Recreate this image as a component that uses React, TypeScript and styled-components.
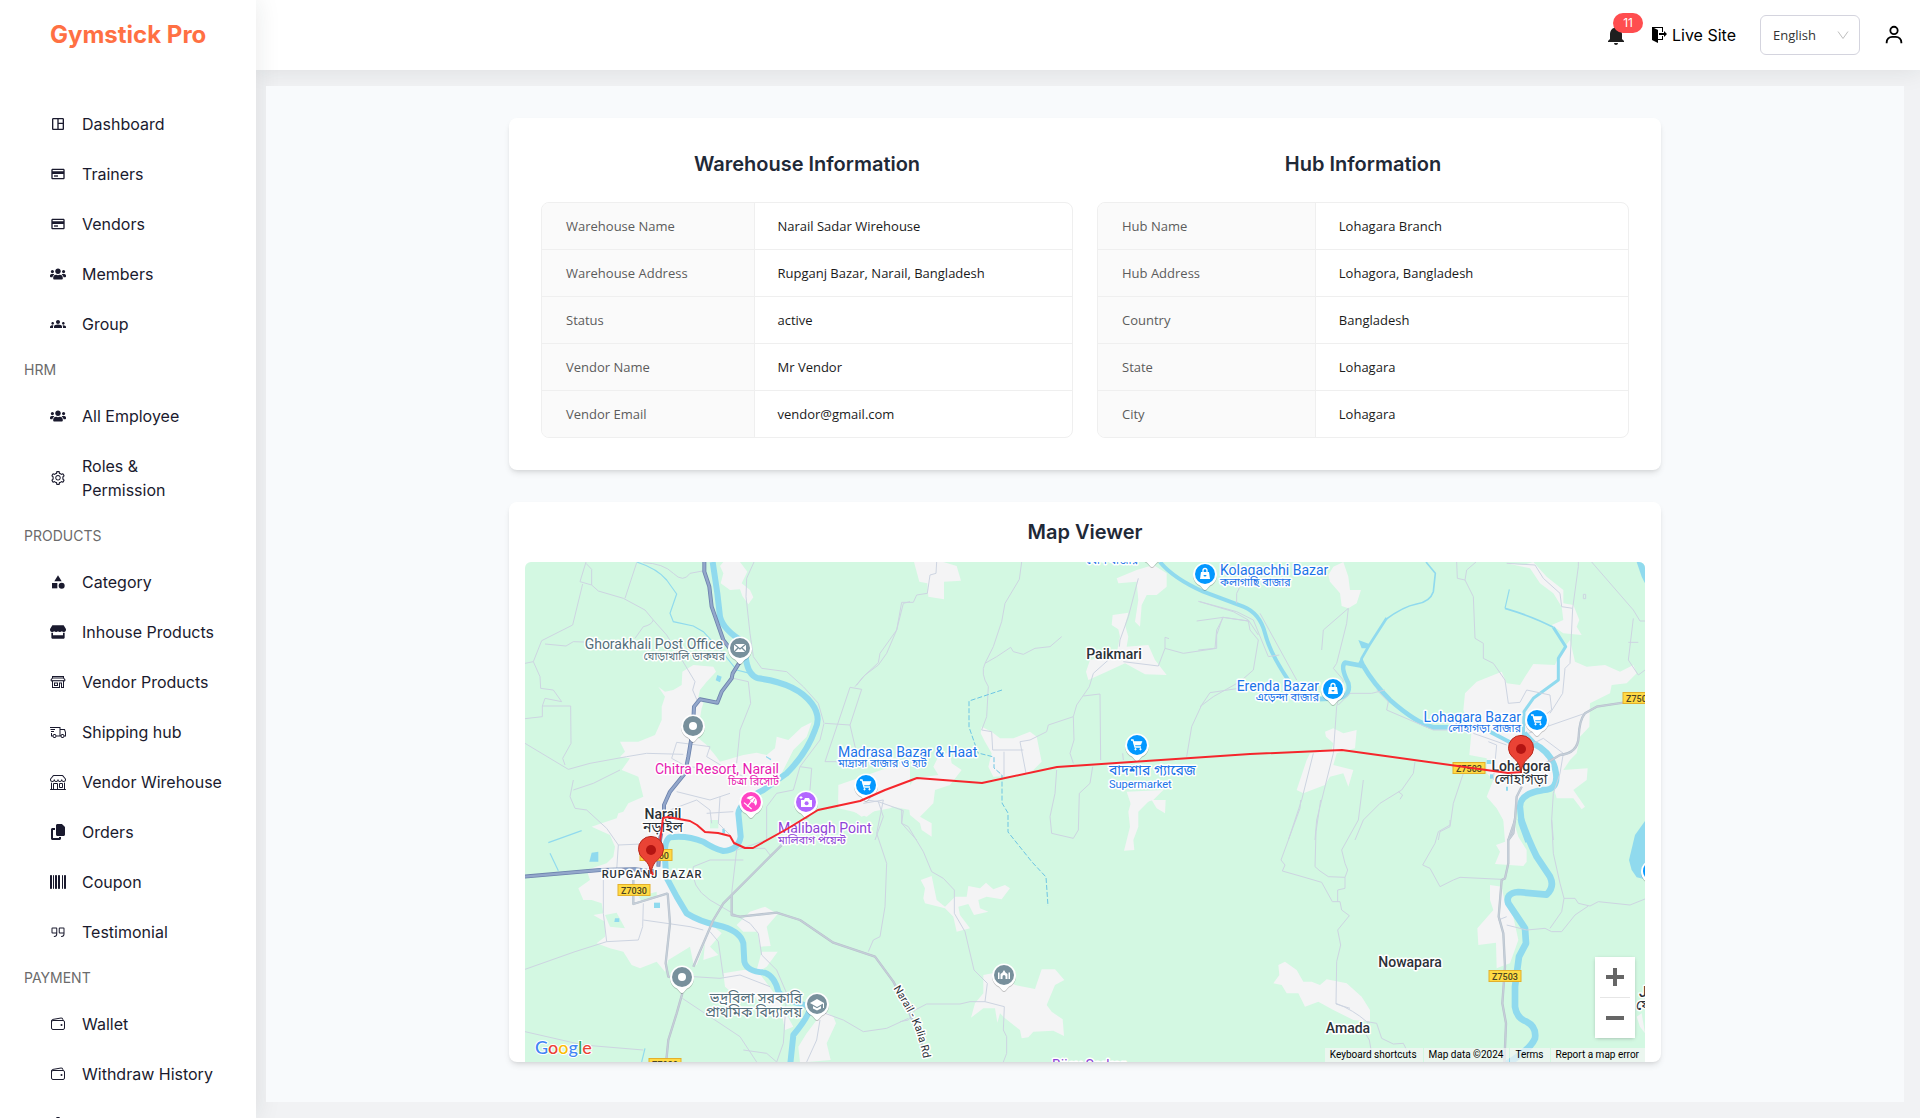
import React from "react";
import styled, { createGlobalStyle } from "styled-components";
import type { IconType } from "react-icons";
import {
  MdOutlineSpaceDashboard,
  MdGroups,
  MdCategory,
  MdNotifications,
} from "react-icons/md";
import { FaUsers, FaStore } from "react-icons/fa";
import { FaCopy, FaBarcode } from "react-icons/fa6";
import { BiCreditCard, BiUser } from "react-icons/bi";
import { AiOutlineSetting } from "react-icons/ai";
import { LiaStoreAltSolid, LiaShippingFastSolid } from "react-icons/lia";
import { PiQuotes } from "react-icons/pi";
import { BsShop } from "react-icons/bs";
import { IoWalletOutline } from "react-icons/io5";
import { ImExit } from "react-icons/im";

const inter = `Inter, "Liberation Sans", sans-serif`;
const body = `"Open Sans", "Noto Sans", sans-serif`;
const mapFont = `Roboto, "Noto Sans", "Noto Sans Bengali", sans-serif`;

const GlobalStyle = createGlobalStyle`
  *, *::before, *::after { box-sizing: border-box; }
  body {
    margin: 0;
    background: #f1f2f4;
    font-family: ${inter};
    font-size: 16px;
    line-height: 24px;
    color: #000;
  }
  button, select { font: inherit; color: inherit; }
`;

/* ---------- shell ---------- */

const Shell = styled.div`
  display: grid;
  grid-template-columns: 256px minmax(0, 1fr);
  height: 100vh;
  overflow: hidden;
`;

const Sidebar = styled.aside`
  position: relative;
  z-index: 2;
  background: #fff;
  box-shadow: 0 0 24px rgba(30, 35, 40, 0.1);
  overflow: hidden;
`;

const Brand = styled.a`
  display: flex;
  align-items: center;
  height: 70px;
  padding-left: 50px;
  color: #ff7043;
  font-size: 24px;
  font-weight: 700;
  text-decoration: none;
`;

const Nav = styled.nav`
  padding-top: 29px;
`;

const NavList = styled.ul`
  margin: 0;
  padding: 0;
  list-style: none;
`;

const NavHeading = styled.h2`
  margin: 0;
  padding: 9px 24px;
  font-size: 14px;
  font-weight: 400;
  line-height: 24px;
  color: #6b6b6b;
`;

const NavLink = styled.a`
  display: flex;
  align-items: center;
  gap: 16px;
  min-height: 50px;
  padding: 13px 34px 13px 50px;
  color: #1a1a2e;
  text-decoration: none;

  svg {
    flex: none;
    width: 16px;
    height: 16px;
  }
`;

const Page = styled.div`
  display: flex;
  flex-direction: column;
  min-width: 0;
`;

const Header = styled.header`
  position: relative;
  z-index: 1;
  flex: none;
  display: flex;
  align-items: center;
  justify-content: flex-end;
  height: 70px;
  padding-right: 15px;
  background: #fff;
  box-shadow: 0 0 24px rgba(30, 35, 40, 0.1);
`;

const BellButton = styled.button`
  position: relative;
  display: flex;
  margin-right: 24px;
  padding: 0;
  border: 0;
  background: none;
  color: #1f1f1f;
`;

const Badge = styled.span`
  position: absolute;
  left: 9px;
  top: -10px;
  min-width: 30px;
  padding: 0 8px;
  border-radius: 10px;
  background: #ff4d4f;
  color: #fff;
  font-size: 12px;
  line-height: 20px;
  text-align: center;
`;

const LiveLink = styled.a`
  display: flex;
  align-items: center;
  gap: 4px;
  margin-right: 24px;
  color: #000;
  text-decoration: none;
`;

const LanguageBox = styled.label`
  position: relative;
  display: flex;
  align-items: center;
  margin-right: 23px;

  svg {
    position: absolute;
    right: 11px;
    pointer-events: none;
  }
`;

const LanguageSelect = styled.select`
  appearance: none;
  width: 100px;
  height: 40px;
  padding: 0 30px 0 12px;
  border: 1px solid #d4d4de;
  border-radius: 6px;
  background: #fff;
  color: #333;
  font-family: ${body};
  font-size: 13px;
`;

const HiddenLabel = styled.span`
  position: absolute;
  width: 1px;
  height: 1px;
  overflow: hidden;
  clip-path: inset(50%);
`;

const IconButton = styled.button`
  display: flex;
  padding: 0;
  border: 0;
  background: none;
`;

const Main = styled.main`
  flex: 1;
  display: flex;
  min-height: 0;
  padding: 16px 16px 16px 10px;
`;

const Canvas = styled.div`
  position: relative;
  z-index: 3;
  flex: 1;
  padding: 32px;
  background: #f8fafc;
  overflow: hidden;
`;

const Column = styled.div`
  display: flex;
  flex-direction: column;
  gap: 32px;
  max-width: 1152px;
  margin: 0 auto;
`;

/* ---------- cards ---------- */

const Card = styled.section<{ $map?: boolean }>`
  padding: ${(p) => (p.$map ? "16px 16px 0" : "32px")};
  border-radius: 8px;
  background: #fff;
  box-shadow: 0 4px 6px -1px rgba(0, 0, 0, 0.1), 0 2px 4px -2px rgba(0, 0, 0, 0.1);
`;

const InfoGrid = styled.div`
  display: grid;
  grid-template-columns: repeat(2, minmax(0, 1fr));
  gap: 24px;
`;

const CardTitle = styled.h2<{ $gap: number }>`
  margin: 0 0 ${(p) => p.$gap}px;
  color: #1f2937;
  font-size: 20px;
  font-weight: 600;
  line-height: 28px;
  text-align: center;
`;

const TableFrame = styled.div`
  border: 1px solid #efefef;
  border-radius: 8px;
  overflow: hidden;
`;

const InfoTable = styled.table`
  width: 100%;
  border-collapse: collapse;
  table-layout: fixed;
  font-family: ${body};
  font-size: 13px;
  line-height: 22px;
  text-align: left;

  tr + tr > * {
    border-top: 1px solid #efefef;
  }
`;

const LabelCell = styled.th<{ $share: number }>`
  width: ${(p) => p.$share}%;
  padding: 12px 24px;
  border-right: 1px solid #efefef;
  background: #fafafa;
  color: #5c5c5c;
  font-weight: 400;
`;

const ValueCell = styled.td`
  padding: 12px 23px;
  color: #1a1a1a;
`;

/* ---------- map ---------- */

const MapFrame = styled.div`
  position: relative;
  height: 500px;
  border-radius: 6px 6px 0 0;
  background: #d3f8e2;
  font-family: ${mapFont};
  overflow: hidden;
`;

const MapDrawing = styled.svg`
  display: block;
  width: 100%;
  height: 100%;
`;

const MapText = styled.text<{ $color: string; $size: number; $weight?: number }>`
  fill: ${(p) => p.$color};
  font-size: ${(p) => p.$size}px;
  font-weight: ${(p) => p.$weight ?? 400};
  stroke: #fff;
  stroke-width: 3px;
  stroke-linejoin: round;
  paint-order: stroke;
`;

const ZoomControl = styled.div`
  position: absolute;
  right: 10px;
  bottom: 24px;
  display: flex;
  flex-direction: column;
  width: 40px;
  padding: 0 5px;
  background: #fff;
  box-shadow: 0 1px 4px -1px rgba(0, 0, 0, 0.3);
`;

const ZoomButton = styled.button`
  display: flex;
  align-items: center;
  justify-content: center;
  height: 40px;
  padding: 0;
  border: 0;
  background: none;

  & + & {
    height: 41px;
    border-top: 1px solid #e6e6e6;
  }
`;

const Attribution = styled.div`
  position: absolute;
  right: 0;
  bottom: 0;
  display: flex;
  gap: 1px;
  font-size: 10px;
  line-height: 14px;

  > * {
    padding: 0 6px 0 5px;
    border: 0;
    background: rgba(245, 245, 245, 0.7);
    color: #000;
    text-decoration: none;
  }
`;

/* ---------- data ---------- */

type NavItem = { label: string; icon: IconType };
type NavGroup = { title?: string; items: NavItem[] };

const navGroups: NavGroup[] = [
  {
    items: [
      { label: "Dashboard", icon: MdOutlineSpaceDashboard },
      { label: "Trainers", icon: BiCreditCard },
      { label: "Vendors", icon: BiCreditCard },
      { label: "Members", icon: FaUsers },
      { label: "Group", icon: MdGroups },
    ],
  },
  {
    title: "HRM",
    items: [
      { label: "All Employee", icon: FaUsers },
      { label: "Roles & Permission", icon: AiOutlineSetting },
    ],
  },
  {
    title: "PRODUCTS",
    items: [
      { label: "Category", icon: MdCategory },
      { label: "Inhouse Products", icon: FaStore },
      { label: "Vendor Products", icon: LiaStoreAltSolid },
      { label: "Shipping hub", icon: LiaShippingFastSolid },
      { label: "Vendor Wirehouse", icon: BsShop },
      { label: "Orders", icon: FaCopy },
      { label: "Coupon", icon: FaBarcode },
      { label: "Testimonial", icon: PiQuotes },
    ],
  },
  {
    title: "PAYMENT",
    items: [
      { label: "Wallet", icon: IoWalletOutline },
      { label: "Withdraw History", icon: IoWalletOutline },
      { label: "", icon: AiOutlineSetting },
    ],
  },
];

const warehouseRows = [
  ["Warehouse Name", "Narail Sadar Wirehouse"],
  ["Warehouse Address", "Rupganj Bazar, Narail, Bangladesh"],
  ["Status", "active"],
  ["Vendor Name", "Mr Vendor"],
  ["Vendor Email", "vendor@gmail.com"],
];

const hubRows = [
  ["Hub Name", "Lohagara Branch"],
  ["Hub Address", "Lohagora, Bangladesh"],
  ["Country", "Bangladesh"],
  ["State", "Lohagara"],
  ["City", "Lohagara"],
];

/* Each tile keeps its shapes at three units to the map pixel. */
type Tile = {
  x: number;
  y: number;
  built?: string[];
  green?: string[];
  lakes?: string[];
  lanes?: string[];
  trunks?: string[];
  highways?: string[];
  rivers?: [string, number][];
  streams?: string[];
};

const tiles: Tile[] = [
  {
    x: 510,
    y: 490,
    built: [
      "M630 228 640 216 690 216 712 245 695 280 720 300 730 322 715 343 697 318 690 298 660 300 632 280 640 250Z",
      "M517 545 550 525 610 530 618 545 590 575 570 600 565 620 580 640 575 655 560 740 590 765 615 795 630 815 700 795 740 788 770 795 795 775 800 740 835 750 875 712 905 697 890 740 850 780 815 850 760 900 690 940 685 980 692 1040 680 1075 640 1085 600 1070 560 1045 500 1040 465 1055 465 1160 490 1210 530 1270 600 1300 635 1330 600 1370 625 1395 580 1410 585 1360 560 1425 550 1420 540 1370 475 1410 465 1445 440 1415 390 1435 365 1425 340 1385 300 1375 260 1360 285 1340 285 1295 250 1275 280 1270 275 1240 245 1230 220 1230 205 1195 240 1170 230 1140 290 1120 310 1100 315 1070 300 1035 245 1010 275 1000 320 985 325 970 340 965 355 940 400 920 385 860 335 840 360 805 330 800 345 785 330 755 385 755 435 735 455 690 455 650 465 620 445 590 465 605 490 600 515 585Z",
    ],
    lakes: ["M622 555 635 560 630 577 617 571Z", "M768 798 784 807 782 811 768 802Z"],
    lanes: [
      "M228 216 210 275 245 285 245 238 228 220",
      "M245 285 265 303 340 325 405 360 430 390 470 435 510 500 555 575 548 600 565 640",
      "M218 282 188 405 95 452 70 515 45 520",
      "M105 462 168 468 190 455 280 458",
      "M430 390Q425 405 400 410L375 445",
      "M380 218 345 325",
      "M400 218Q460 220 490 250T540 250L583 242",
      "M70 515 90 560 92 595 130 600 155 635 105 625 97 648 97 680 45 686",
      "M97 648 182 648 183 760 158 805 165 825",
      "M45 760 175 838 240 820 350 800 410 790 520 793",
      "M732 216 710 265 708 320 720 430 730 500 755 535 830 545 880 590 925 640 942 700",
      "M670 565 715 575 722 640 690 720 680 820",
      "M1200 335 1180 340 1160 420 1130 490 1105 525 1065 555 1040 585",
      "M1020 592 1055 598 1020 705 945 700",
      "M1020 592 945 815 985 815",
      "M942 700 930 750 870 830 850 900",
      "M1020 705 1040 790",
      "M870 830 905 835 900 900",
      "M500 757 485 805 530 830 600 835",
      "M500 757 600 770 590 800 640 830 700 860",
      "M190 900 250 880 330 840",
    ],
    highways: [
      "M583 212 583 245 598 290 605 350 640 450 690 515 668 550 665 565 635 605 622 638 570 628 552 650 550 690",
      "M545 740 535 800 525 850 480 905 462 945 462 980 450 1050 445 1130",
      "M42 1160 270 1140 375 1138 440 1145",
    ],
    streams: ["M380 216Q440 235 470 270L500 312 480 370 490 395 550 408 580 425 640 490 680 540 720 550"],
  },
  {
    x: 510,
    y: 780,
    built: [
      "M680 435 720 395 765 380 803 402 770 440 782 498 750 500 742 455 700 455Z",
      "M755 515 803 515 770 560 745 575 800 650 850 740 825 750 815 700 730 650 680 650 645 620 640 580 700 570 740 570Z",
      "M865 800 890 760 920 720 925 680 970 710 978 730 950 790 962 840 870 848Z",
      "M985 15 1200 -60 1200 90 1150 80 1110 80 1070 110 1030 95 985 85Z",
    ],
    green: ["M600 120 625 120 625 145 600 145Z", "M285 405 320 398 345 445 300 440Z", "M385 350 440 335 440 350 395 362Z"],
    lakes: [
      "M245 218 265 215 265 245 238 245Z",
      "M432 368 450 368 450 384 432 384Z",
      "M315 415 328 415 328 426 313 426Z",
      "M637 146 645 146 645 160 637 160Z",
    ],
    lanes: [
      "M190 0 180 50 195 85 230 90 290 145 325 195 320 270",
      "M280 300 280 400 290 485",
      "M45 568 195 515 290 485 385 480 398 440 400 370",
      "M400 420 540 440 580 450",
      "M325 195 440 190",
      "M500 35 600 60 660 40",
      "M480 90 560 60 600 90 605 130",
      "M630 50 625 130 660 165",
      "M590 100 670 95",
      "M550 260 600 240 700 240",
      "M550 260Q540 320 600 360L720 430 745 460 755 525 800 570 830 640",
      "M600 455 625 485 640 590",
      "M550 590 630 595 690 585 780 620",
      "M517 655 690 770 740 846",
      "M45 755 220 795 400 810",
      "M700 810 770 820 800 846",
      "M1120 60 1100 160 1130 250 1125 380 1110 470 1090 480 1075 515",
      "M945 700 1000 720 1060 755 1130 745 1195 715",
      "M930 720 920 780 890 846",
      "M830 640 820 790 800 846",
      "M1120 60 1060 70",
      "M770 80 770 180 680 210 665 340",
      "M850 30 800 40 770 80",
      "M690 205 765 205 780 225",
    ],
    trunks: [
      "M820 190 640 370 610 420 550 560",
      "M665 345 665 405 690 410 800 398 870 420 970 488 1095 530 1150 605 1195 690 1250 830",
      "M473 340 480 430 467 550 475 590 515 600",
      "M370 300 370 372 473 340",
      "M517 640 500 700 475 780 468 850",
    ],
    rivers: [
      [
        "M608 -654 622 -560 630 -490Q640 -450 700 -415L710 -350Q720 -310 745 -305 860 -290 905 -230 935 -190 915 -150 890 -80 830 -20L760 30Q690 65 685 100L692 170Q685 210 640 213 610 205 580 185 530 165 480 172 463 180 465 230L468 290 500 350 530 400Q570 425 620 435 690 450 700 490L703 545Q710 575 765 578 795 590 805 635 820 660 900 680 900 705 850 765L840 860",
        18,
      ],
    ],
    streams: ["M115 188 215 152", "M120 220 145 272", "M405 805 395 846"],
  },
  {
    x: 800,
    y: 540,
    built: [
      "M342 66 430 66 470 78 483 122 432 125 432 178 385 170 382 130 358 125Z",
      "M950 115 1010 90 1060 75 1100 100 1100 140 1070 165 1040 165 1025 195 1020 260 1005 245 1015 180 1010 125 955 130Z",
      "M938 225 985 218 975 255 985 290 980 320 1045 315 1065 360 1100 405 1035 403 975 370 910 400 865 420 858 395 870 360 950 340 960 290 955 268 935 255Z",
      "M545 560 575 575 600 595 640 595 690 575 710 590 725 665 700 690 680 705 580 710 565 680 575 640 555 605 542 580Z",
      "M400 680 420 640 450 640 455 670 485 690 450 735 405 750 400 790 360 830 395 850 395 890 365 870 360 850 330 825 320 750 345 715 415 705Z",
      "M118 740 240 745 275 765 300 790 270 805 215 815 185 830 115 780Z",
    ],
    lanes: [
      "M410 66 408 100 390 105 382 160 350 165 340 187 305 187 290 270 240 340 235 368 190 410 165 440",
      "M665 66 658 118 615 190 605 245 580 320 555 370Q540 400 565 440L560 530 545 570 575 575 578 630 670 630",
      "M555 370 590 350 632 322 640 335 670 343 705 325 750 320 785 290",
      "M1015 115 985 230 960 300 958 320",
      "M925 360 880 400 868 440 830 495 820 530 745 555 740 575 690 600 660 605 678 700",
      "M850 468 900 462 902 660",
      "M820 530 822 600 810 640 820 670",
      "M612 635 612 710",
      "M970 365 1075 378 1095 325 1150 340 1250 325 1250 285 1268 232 1345 243",
      "M1095 325 1095 292 1107 296",
      "M1195 184 1300 215 1345 240 1375 285",
      "M1350 440 1230 458 1205 495 1175 560 1160 650",
      "M770 690 765 760 750 830 755 880 820 895 835 870 838 760 870 730 878 680",
      "M970 660 968 640",
      "M235 785 305 810 305 850 350 900",
      "M235 785 250 830 225 900",
      "M200 780 235 785",
    ],
  },
  {
    x: 900,
    y: 800,
    built: [
      "M695 0 750 0 715 35 715 80 700 120 703 150 672 152 690 80 685 35Z",
      "M755 0 797 0 795 40 770 25Z",
      "M680 -25 790 -30 760 0 695 20Z",
      "M62 240 95 228 110 300 135 320 165 290 200 290 205 258 240 265 258 248 280 268 315 255 330 265 305 298 260 290 235 300 240 325 265 335 222 345 205 312 175 320 180 345 210 385 170 395 160 350 135 325 75 310 70 295 75 265Z",
      "M250 525 300 515 345 555 405 567 425 508 465 508 493 540 465 555 440 615 455 635 488 658 492 708 460 692 400 695 385 712 365 715 360 690 315 655 300 640 292 668 285 625 250 625 213 653 225 610 250 580Z",
    ],
    lanes: [
      "M0 28 10 32 5 70 25 80 70 155 95 215 130 235 163 270 163 340 195 395 222 510 262 550 255 605 313 620 310 690 320 710 320 760 310 786",
      "M255 605 210 605 180 612 80 612 45 630 25 660 0 665",
      "M1202 0 1200 25 1143 180 1155 195 1147 213 1200 228 1265 247 1297 305 1320 305 1325 330 1348 347 1313 390 1322 435 1310 485 1308 612 1350 625",
      "M1262 0 1248 95 1245 200 1260 213 1285 230 1335 232 1335 265 1313 270 1313 305",
      "M1390 -60 1375 60 1325 150 1335 190 1343 210 1335 232",
    ],
  },
  {
    x: 1200,
    y: 540,
    built: [
      "M385 105 400 80 430 66 445 110 450 150 483 150 470 190 445 205 425 198 420 160 390 125Z",
      "M795 460 830 425 905 395 920 430 960 435 975 410 1000 372 1065 375 1080 340 1110 300 1125 365 1160 380 1215 375 1260 395 1300 375 1310 400 1280 430 1235 435 1230 460 1170 490 1168 560 1140 590 1130 640 1110 660 1090 690 1163 685 1160 720 1120 750 1155 800 1145 808 1120 775 1070 775 1060 740 980 770 945 800 940 860 930 900 915 850 890 805 860 770 880 720 860 700 860 655 808 645 815 570 790 510Z",
      "M920 70 970 75 1000 66 1040 110 1090 150 1090 190 1120 195 1138 240 1130 260 1145 285 1090 280 1055 255 1090 240 1085 200 1060 160 1020 130 990 85Z",
      "M375 575 400 565 430 580 470 570 465 625 410 640 400 675 460 690 445 740 430 700 390 710 375 735 310 760 290 750 320 660 330 640 395 630 400 610 378 590Z",
    ],
    lakes: [
      "M1310 66 1336 66 1336 132 1325 110Z",
      "M475 300 508 312 500 325 485 325Z",
      "M860 660 880 660 880 672 860 672Z",
      "M870 703 880 703 880 716 870 716Z",
      "M918 740 924 740 924 752 918 752Z",
      "M485 350 500 385 470 378Z",
    ],
    lanes: [
      "M770 66 772 115 795 120 800 90 828 66",
      "M795 120 820 170 825 295 850 310 850 355 880 370 915 420 925 490 960 487",
      "M920 70 1005 75 1030 115 1080 160 1085 200 1118 205 1135 80 1135 66",
      "M1118 205 1110 370 1095 385 1088 460 1050 520",
      "M1175 66 1300 210 1320 243 1335 243",
      "M1300 235 1285 360 1315 405 1335 390",
      "M1285 307 1315 307",
      "M445 205 370 270 365 330",
      "M445 205 440 250 410 370 400 385 430 420 410 500 400 640 350 840 345 900",
      "M415 495 450 460 515 460 555 450",
      "M530 450 565 485 560 510 700 570 745 570",
      "M340 640 305 780 265 900",
      "M645 665 640 700 605 750 540 790 490 840 465 900",
      "M790 700 760 790 750 860 720 875 715 900",
      "M0 185 110 215 160 240 205 350 238 345",
      "M180 220 290 420",
      "M110 190 110 160 125 130",
      "M-10 243 70 232 145 243 150 270 175 300 160 390 120 425 40 470 0 500",
      "M-5 330 45 325 50 270 70 232",
      "M960 487 980 450 1050 465 1055 510 990 560",
      "M1155 520 1040 560 985 580",
      "M820 580 920 615",
      "M865 605 890 615 880 720",
      "M1000 610 1030 595 1090 640 1080 700 1060 760 1055 840 1060 900",
      "M595 755 608 765 600 778",
      "M1150 163 1157 163 1157 176 1150 176Z",
    ],
    trunks: ["M1275 487 1190 500 1155 520Q1138 540 1136 590T1080 645L1020 680", "M965 740 950 770 945 840 925 900"],
    rivers: [
      ["M-120 66Q-80 115 10 155L130 200Q180 220 195 280T268 425L300 460", 12],
      ["M340 478 400 475Q455 475 445 430 420 380 435 368L490 378Q520 430 570 480 650 550 700 562L750 562", 14],
      ["M870 575 940 612 980 620", 12],
      ["M972 580 1000 610Q1060 640 1068 700 1075 750 1030 750 960 760 960 800L965 850 985 905", 19],
      ["M1060 262 1097 320 1075 355 1075 420 1000 475 972 515 970 590", 9],
      ["M915 205Q1000 230 1060 262", 5],
      ["M678 66 706 100 700 155Q690 185 650 192T555 240", 5],
      ["M560 234 508 315 485 355 485 385", 8],
    ],
    streams: ["M928 148 915 205"],
  },
  {
    x: 1250,
    y: 820,
    built: [
      "M85 435 105 425 140 450 160 485 185 485 210 495 230 478 290 490 335 530 360 570 360 605 310 600 250 570 205 545 165 560 145 520 110 520 95 495 70 490 88 465Z",
      "M760 0 790 0 805 50 830 90 830 125 820 138 735 132 750 95 738 75 765 65Z",
      "M720 195 755 200 765 250 790 290 805 360 780 430 765 435 740 445 738 368 685 375 682 325 730 270 720 240Z",
      "M1160 590 1175 580 1185 640 1170 620Z",
    ],
    lakes: ["M1187 0 1155 45 1137 120 1145 150 1160 172 1187 178Z"],
    lanes: [
      "M600 0 600 15 565 35 555 70 518 135 540 145 570 200 610 180 630 172 755 178",
      "M258 550Q310 570 350 605L380 610 395 655 430 672 460 670 480 710",
      "M355 605 340 630 358 660 365 700",
      "M905 0 910 100 930 190 942 235 935 275 900 325",
      "M942 235 975 235 985 250 1020 258 1045 245 1140 255 1185 237",
      "M1015 258 975 285 935 335 905 335 885 325 830 330 770 315",
      "M745 300 770 290",
    ],
    trunks: ["M795 -5 790 40 775 60 775 130 765 175 755 180 746 290 760 340 765 440 757 550 768 610 763 730"],
    rivers: [
      [
        "M812 -5Q835 60 860 110L900 170Q915 200 890 224L805 216Q765 220 775 250L825 325 828 370 807 410 795 500 795 560Q800 595 830 605 860 620 855 655 840 690 765 735",
        20,
      ],
    ],
  },
];

const Tiles = ({ draw }: { draw: (tile: Tile) => React.ReactNode }) => (
  <>
    {tiles.map((tile, i) => (
      <g key={i} transform={`translate(${tile.x} ${tile.y}) scale(${1 / 3})`}>
        {draw(tile)}
      </g>
    ))}
  </>
);

const paths = (list: string[] | undefined, props: React.SVGProps<SVGPathElement>) =>
  list?.map((d, i) => <path key={i} d={d} {...props} />);

type PoiKind = "dot" | "mail" | "cart" | "bag" | "camera" | "umbrella" | "school" | "hall";

const poiGlyphs: Record<PoiKind, React.ReactNode> = {
  dot: <circle r="4" fill="#fff" />,
  mail: (
    <g>
      <rect x="-6" y="-4" width="12" height="8" fill="#fff" />
      <path d="M-6-4 0 1 6-4M-6 4-2 0M6 4 2 0" stroke="#78909c" strokeWidth="1.3" fill="none" />
    </g>
  ),
  cart: (
    <g fill="#fff" stroke="#fff">
      <path d="M-6-5H-4L-2 2H4" fill="none" strokeWidth="1.3" />
      <path d="M-3.5-3.5H5L3.5 0H-2.5Z" strokeWidth=".6" />
      <circle cx="-1.5" cy="4.2" r=".7" />
      <circle cx="3.5" cy="4.2" r=".7" />
    </g>
  ),
  bag: (
    <g>
      <path d="M-4-2H4L5 5H-5Z" fill="#fff" />
      <path d="M-2-2V-3.5A2 2 0 0 1 2-3.5V-2" fill="none" stroke="#fff" strokeWidth="1.3" />
      <path d="M-1.5 1A1.5 1.5 0 0 0 1.5 1Z" fill="#0398ff" />
    </g>
  ),
  camera: (
    <g>
      <path d="M-5-2H-2L-1-4H3L4-2H6V5H-5Z" fill="#fff" />
      <circle cx=".6" cy="1.3" r="2" fill="#b366ff" />
      <path d="M-5-6V-3M-6.5-4.5H-3.5" stroke="#fff" />
    </g>
  ),
  umbrella: (
    <g transform="rotate(40)">
      <path d="M-6 0A6 6 0 0 1 6 0L3-1.2 0 0-3-1.2Z" fill="#fff" />
      <path d="M-2-1-1-5M2-1 1-5" stroke="#ff44c4" strokeWidth=".8" />
      <path d="M0-1V6M-5 5 5 5" stroke="#fff" strokeWidth="1.2" />
    </g>
  ),
  school: (
    <g fill="#fff">
      <path d="M0-5 7-1 0 3-7-1Z" />
      <path d="M-4 2V4.5L0 6.5 4 4.5V2L0 4.2ZM6-1H7V4H6Z" />
    </g>
  ),
  hall: (
    <path
      d="M-6-2.5H-4.5V4H-6ZM4.5-2.5H6V4H4.5ZM-3.5 4V-1L-1.5-2.5 0-5 1.5-2.5 3.5-1V4H1.5V1.5A1.5 1.5 0 0 0-1.5 1.5V4Z"
      fill="#fff"
    />
  ),
};

const pois: { x: number; y: number; kind: PoiKind; color: string }[] = [
  { x: 740, y: 648, kind: "mail", color: "#78909c" },
  { x: 693, y: 726, kind: "dot", color: "#78909c" },
  { x: 751, y: 802, kind: "umbrella", color: "#ff44c4" },
  { x: 806, y: 802, kind: "camera", color: "#b366ff" },
  { x: 682, y: 977, kind: "dot", color: "#78909c" },
  { x: 817, y: 1004, kind: "school", color: "#78909c" },
  { x: 1004, y: 975, kind: "hall", color: "#78909c" },
  { x: 866, y: 785, kind: "cart", color: "#0398ff" },
  { x: 1137, y: 745, kind: "cart", color: "#0398ff" },
  { x: 1152, y: 551, kind: "bag", color: "#0398ff" },
  { x: 1205, y: 574, kind: "bag", color: "#0398ff" },
  { x: 1333, y: 689, kind: "bag", color: "#0398ff" },
  { x: 1537, y: 720, kind: "cart", color: "#0398ff" },
  { x: 1653, y: 871, kind: "cart", color: "#0398ff" },
];

const Poi = ({ x, y, kind, color }: (typeof pois)[number]) => (
  <g transform={`translate(${x} ${y})`}>
    <path
      d="M0 16C-1.5 16-2.5 14-5 11.5A12 12 0 1 1 5 11.5C2.5 14 1.5 16 0 16Z"
      fill="#000"
      opacity=".22"
      transform="translate(0 1)"
    />
    <path d="M0 16C-1.5 16-2.5 14-5 11.5A12 12 0 1 1 5 11.5C2.5 14 1.5 16 0 16Z" fill="#fff" />
    <circle r="10" fill={color} />
    {poiGlyphs[kind]}
  </g>
);

const Marker = ({ x, y }: { x: number; y: number }) => (
  <g transform={`translate(${x} ${y})`}>
    <path
      d="M0 0C-1-9-4-12-8-15.5A12.5 12.5 0 1 1 8-15.5C4-12 1-9 0 0Z"
      fill="#ea4335"
      stroke="#b8281c"
      strokeWidth="1"
    />
    <circle cy="-24" r="5" fill="#b31412" />
  </g>
);

type Label = {
  x: number;
  y: number;
  text: string;
  color: string;
  size: number;
  anchor?: "start" | "middle" | "end";
  weight?: number;
};

const slate = "#546e7a";
const blue = "#1a73e8";
const pink = "#e61bb0";
const violet = "#8e44d6";
const ink = "#2b3137";

const labels: Label[] = [
  { x: 723, y: 649, text: "Ghorakhali Post Office", color: slate, size: 14, anchor: "end" },
  { x: 725, y: 660, text: "ঘোড়াখালি ডাকঘর", color: slate, size: 11, anchor: "end" },
  { x: 779, y: 774, text: "Chitra Resort, Narail", color: pink, size: 14, anchor: "end" },
  { x: 779, y: 785, text: "চিত্রা রিসোর্ট", color: pink, size: 11, anchor: "end" },
  { x: 838, y: 757, text: "Madrasa Bazar & Haat", color: blue, size: 14 },
  { x: 838, y: 767, text: "মাদ্রাসা বাজার ও হাট", color: blue, size: 11 },
  { x: 778, y: 833, text: "Malibagh Point", color: violet, size: 14 },
  { x: 778, y: 844, text: "মালিবাগ পয়েন্ট", color: violet, size: 11 },
  { x: 663, y: 819, text: "Narail", color: ink, size: 14, anchor: "middle", weight: 500 },
  { x: 663, y: 832, text: "নড়াইল", color: ink, size: 14, anchor: "middle" },
  { x: 802, y: 1003, text: "ভদ্রবিলা সরকারি", color: slate, size: 14, anchor: "end" },
  { x: 802, y: 1017, text: "প্রাথমিক বিদ্যালয়", color: slate, size: 14, anchor: "end" },
  { x: 1114, y: 659, text: "Paikmari", color: ink, size: 14, anchor: "middle", weight: 500 },
  { x: 1220, y: 575, text: "Kolagachhi Bazar", color: blue, size: 14 },
  { x: 1220, y: 586, text: "কলাগাছি বাজার", color: blue, size: 11 },
  { x: 1138, y: 564, text: "বেণি বাজার", color: blue, size: 11, anchor: "end" },
  { x: 1319, y: 691, text: "Erenda Bazar", color: blue, size: 14, anchor: "end" },
  { x: 1319, y: 701, text: "এড়েন্দা বাজার", color: blue, size: 11, anchor: "end" },
  { x: 1521, y: 722, text: "Lohagara Bazar", color: blue, size: 14, anchor: "end" },
  { x: 1521, y: 732, text: "লোহাগড়া বাজার", color: blue, size: 11, anchor: "end" },
  { x: 1109, y: 775, text: "বাদশার গ্যারেজ", color: blue, size: 14 },
  { x: 1109, y: 788, text: "Supermarket", color: blue, size: 11 },
  { x: 1521, y: 771, text: "Lohagora", color: ink, size: 14, anchor: "middle", weight: 500 },
  { x: 1521, y: 784, text: "লোহাগড়া", color: ink, size: 14, anchor: "middle" },
  { x: 1410, y: 967, text: "Nowapara", color: ink, size: 14, anchor: "middle", weight: 500 },
  { x: 1348, y: 1033, text: "Amada", color: ink, size: 14, anchor: "middle", weight: 500 },
  { x: 1639, y: 997, text: "J", color: ink, size: 14, weight: 500 },
  { x: 1636, y: 1010, text: "যে", color: ink, size: 14 },
  { x: 1052, y: 1070, text: "Bijoy Sarkar", color: violet, size: 14 },
];

const shields = [
  { x: 656, y: 855, text: "Z7060" },
  { x: 634, y: 890, text: "Z7030" },
  { x: 665, y: 1064, text: "Z7030" },
  { x: 1469, y: 768, text: "Z7503" },
  { x: 1639, y: 698, text: "Z7503" },
  { x: 1505, y: 976, text: "Z7503" },
];

const googleLetters: [string, string][] = [
  ["G", "#4285f4"],
  ["o", "#ea4335"],
  ["o", "#fbbc05"],
  ["g", "#4285f4"],
  ["l", "#34a853"],
  ["e", "#ea4335"],
];

const DistrictMap = () => (
  <MapDrawing viewBox="525 562 1120 500" preserveAspectRatio="xMidYMid slice" role="img" aria-label="Route from Narail to Lohagora">
    <Tiles draw={(t) => paths(t.built, { fill: "#f4f4f5" })} />
    <Tiles draw={(t) => paths(t.green, { fill: "#d3f8e2" })} />
    <Tiles
      draw={(t) => (
        <>
          {t.rivers?.map(([d, w], i) => (
            <path key={i} d={d} fill="none" stroke="#90daee" strokeWidth={w} strokeLinejoin="round" />
          ))}
          {paths(t.streams, { fill: "none", stroke: "#90daee", strokeWidth: 3.5 })}
          {paths(t.lakes, { fill: "#90daee" })}
        </>
      )}
    />
    <Tiles draw={(t) => paths(t.lanes, { fill: "none", stroke: "#cdd4e1", strokeWidth: 3, strokeLinejoin: "round" })} />
    <Tiles draw={(t) => paths(t.trunks, { fill: "none", stroke: "#b7c1cc", strokeWidth: 7, strokeLinejoin: "round" })} />
    <Tiles draw={(t) => paths(t.trunks, { fill: "none", stroke: "#c5ced8", strokeWidth: 4, strokeLinejoin: "round" })} />
    <Tiles draw={(t) => paths(t.highways, { fill: "none", stroke: "#6d83ad", strokeWidth: 12, strokeLinejoin: "round" })} />
    <Tiles draw={(t) => paths(t.highways, { fill: "none", stroke: "#93a7cb", strokeWidth: 7, strokeLinejoin: "round" })} />
    <path
      d="M1002 690 969 701V727L978 753 994 757V768L1002 775V803L1008 813V832L1032 862 1046 877 1048 906"
      fill="none"
      stroke="#6cc5e4"
      strokeDasharray="5 2"
    />
    {pois.map((p, i) => (
      <Poi key={i} {...p} />
    ))}
    {shields.map((s, i) => (
      <g key={i} transform={`translate(${s.x} ${s.y})`}>
        <rect x="-16" y="-5.5" width="32" height="11" fill="#ffda44" stroke="#e3b02c" />
        <text y="3.5" fontSize="9" fontWeight="500" textAnchor="middle" fill="#4d4422">
          {s.text}
        </text>
      </g>
    ))}
    {labels.map((l, i) => (
      <MapText key={i} x={l.x} y={l.y} textAnchor={l.anchor} $color={l.color} $size={l.size} $weight={l.weight}>
        {l.text}
      </MapText>
    ))}
    <text
      x="652"
      y="878"
      textAnchor="middle"
      fontSize="11"
      fontWeight="500"
      letterSpacing="1"
      fill={ink}
      stroke="#fff"
      strokeWidth="3"
      paintOrder="stroke"
    >
      RUPGANJ BAZAR
    </text>
    <path id="kalia-road" d="M893 988Q912 1018 917 1034T925 1066" fill="none" />
    <MapText $color={ink} $size={11}>
      <textPath href="#kalia-road">Narail - Kalia Rd</textPath>
    </MapText>
    <path
      d="M653 875 650 868 660 842 663 818 668 817 690 821 697 825 705 832 718 833 730 836 734 843 745 848 753 848 787 829 818 810 860 801 885 790 917 778 982 783 1057 767 1250 754 1342 750 1508 773 1522 772"
      fill="none"
      stroke="#f5262c"
      strokeWidth="2"
      strokeLinejoin="round"
    />
    <Marker x={651} y={874} />
    <Marker x={1521} y={773} />
    <text x="535" y="1054" fontSize="18" fontFamily="Lato, sans-serif" fontWeight="500" stroke="#fff" strokeWidth="2" paintOrder="stroke">
      {googleLetters.map(([letter, color], i) => (
        <tspan key={i} fill={color}>
          {letter}
        </tspan>
      ))}
    </text>
  </MapDrawing>
);

/* ---------- sections ---------- */

const InfoSection = ({ title, rows, share }: { title: string; rows: string[][]; share: number }) => (
  <div>
    <CardTitle $gap={24}>{title}</CardTitle>
    <TableFrame>
      <InfoTable>
        <tbody>
          {rows.map(([label, value]) => (
            <tr key={label}>
              <LabelCell scope="row" $share={share}>
                {label}
              </LabelCell>
              <ValueCell>{value}</ValueCell>
            </tr>
          ))}
        </tbody>
      </InfoTable>
    </TableFrame>
  </div>
);

const App = () => (
  <>
    <GlobalStyle />
    <Shell>
      <Sidebar>
        <Brand href="#">Gymstick Pro</Brand>
        <Nav>
          {navGroups.map((group, g) => (
            <React.Fragment key={g}>
              {group.title && <NavHeading>{group.title}</NavHeading>}
              <NavList>
                {group.items.map(({ label, icon: Icon }) => (
                  <li key={label}>
                    <NavLink href="#" aria-label={label || "Settings"}>
                      <Icon aria-hidden />
                      {label}
                    </NavLink>
                  </li>
                ))}
              </NavList>
            </React.Fragment>
          ))}
        </Nav>
      </Sidebar>
      <Page>
        <Header>
          <BellButton aria-label="Notifications">
            <MdNotifications size={24} />
            <Badge>11</Badge>
          </BellButton>
          <LiveLink href="#">
            <ImExit size={16} />
            Live Site
          </LiveLink>
          <LanguageBox>
            <HiddenLabel>Language</HiddenLabel>
            <LanguageSelect defaultValue="English">
              <option>English</option>
            </LanguageSelect>
            <svg width="12" height="12" viewBox="0 0 12 12" fill="none" stroke="#bfbfbf" aria-hidden>
              <path d="M1 2.5 6 9.5 11 2.5" />
            </svg>
          </LanguageBox>
          <IconButton aria-label="Account">
            <BiUser size={22} />
          </IconButton>
        </Header>
        <Main>
          <Canvas>
            <Column>
              <Card>
                <InfoGrid>
                  <InfoSection title="Warehouse Information" rows={warehouseRows} share={40} />
                  <InfoSection title="Hub Information" rows={hubRows} share={41} />
                </InfoGrid>
              </Card>
              <Card $map>
                <CardTitle $gap={16}>Map Viewer</CardTitle>
                <MapFrame>
                  <DistrictMap />
                  <ZoomControl>
                    <ZoomButton aria-label="Zoom in">
                      <svg width="18" height="18" viewBox="0 0 18 18" fill="#666">
                        <path d="M7 0h4v7h7v4h-7v7H7v-7H0V7h7z" />
                      </svg>
                    </ZoomButton>
                    <ZoomButton aria-label="Zoom out">
                      <svg width="18" height="18" viewBox="0 0 18 18" fill="#666">
                        <path d="M0 7h18v4H0z" />
                      </svg>
                    </ZoomButton>
                  </ZoomControl>
                  <Attribution>
                    <button type="button">Keyboard shortcuts</button>
                    <span>Map data ©2024</span>
                    <a href="#">Terms</a>
                    <a href="#">Report a map error</a>
                  </Attribution>
                </MapFrame>
              </Card>
            </Column>
          </Canvas>
        </Main>
      </Page>
    </Shell>
  </>
);

export default App;
